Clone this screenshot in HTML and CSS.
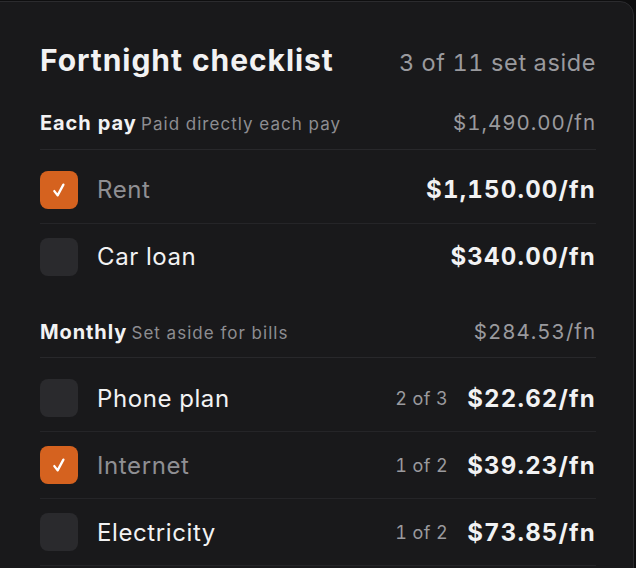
FILE: index.html
```html
<!DOCTYPE html>
<html lang="en">
<head>
  <meta charset="UTF-8">
  <meta name="viewport" content="width=device-width, initial-scale=1">
  <title>Fortnight checklist</title>
  <link rel="stylesheet" href="styles.css">
</head>
<body>

<div class="card">

  <div class="card-head">
    <h1>Fortnight checklist</h1>
    <span class="progress">3 of 11 set aside</span>
  </div>

  <div class="section">
    <div class="section-head">
      <div><b>Each pay</b> <span>Paid directly each pay</span></div>
      <div class="total">$1,490.00/fn</div>
    </div>
    <div class="rows">
      <div class="row done">
        <div class="box"><svg viewBox="0 0 16 16"><path d="M4.6 8.8 L7 11.9 L11.2 4.1"/></svg></div>
        <div class="name">Rent</div>
        <div class="amount">$1,150.00/fn</div>
      </div>
      <div class="row last">
        <div class="box"></div>
        <div class="name">Car loan</div>
        <div class="amount">$340.00/fn</div>
      </div>
    </div>
  </div>

  <div class="section">
    <div class="section-head">
      <div><b>Monthly</b> <span>Set aside for bills</span></div>
      <div class="total">$284.53/fn</div>
    </div>
    <div class="rows">
      <div class="row">
        <div class="box"></div>
        <div class="name">Phone plan</div>
        <div class="count">2 of 3</div>
        <div class="amount">$22.62/fn</div>
      </div>
      <div class="row done">
        <div class="box"><svg viewBox="0 0 16 16"><path d="M4.6 8.8 L7 11.9 L11.2 4.1"/></svg></div>
        <div class="name">Internet</div>
        <div class="count">1 of 2</div>
        <div class="amount">$39.23/fn</div>
      </div>
      <div class="row">
        <div class="box"></div>
        <div class="name">Electricity</div>
        <div class="count">1 of 2</div>
        <div class="amount">$73.85/fn</div>
      </div>
    </div>
  </div>

</div>

</body>
</html>
```

FILE: styles.css
```css
body {
  margin: 0;
  background: #0e0e0f;
  font-family: 'Inter', 'Liberation Sans', sans-serif;
  font-variant-numeric: tabular-nums;
  color: #f2f2f3;
  overflow: hidden;
}
.card {
  background: #19191b;
  border: 1px solid #2b2b2e;
  border-radius: 14px;
  margin: 1px 2px 0 -14px;
  padding: 0 37px 0 53px;
  height: 620px;
}
.card-head {
  display: flex;
  justify-content: space-between;
  align-items: baseline;
  padding-top: 40px;
  margin-bottom: 33px;
  line-height: 1.2;
}
.card-head h1 {
  margin: 0;
  font-size: 30px;
  font-weight: 700;
  letter-spacing: 0.95px;
}
.progress {
  font-size: 23.5px;
  letter-spacing: 0.6px;
  color: #9a9a9e;
}
.section-head {
  display: flex;
  justify-content: space-between;
  align-items: baseline;
  padding-bottom: 13px;
  border-bottom: 1px solid #28282b;
  line-height: 1.2;
}
.section-head b {
  font-size: 20px;
  font-weight: 700;
  letter-spacing: 0.9px;
}
.section-head span {
  font-size: 17px;
  letter-spacing: 1.05px;
  color: #8d8d91;
}
.section-head .total {
  font-size: 20.5px;
  letter-spacing: 1px;
  color: #9a9a9e;
}
.rows {
  padding-top: 7px;
  margin-bottom: 30px;
}
.row {
  display: flex;
  align-items: center;
  height: 66px;
  border-bottom: 1px solid #252528;
}
.row.last {
  border-bottom: none;
}
.box {
  width: 38px;
  height: 38px;
  border-radius: 8px;
  background: #2a2a2d;
  margin-right: 19px;
  display: flex;
  align-items: center;
  justify-content: center;
}
.box svg {
  width: 22px;
  height: 22px;
  fill: none;
  stroke: #fff;
  stroke-width: 1.7;
  stroke-linecap: round;
  stroke-linejoin: round;
}
.row.done .box {
  background: #d5621f;
}
.name {
  flex: 1;
  font-size: 24px;
  letter-spacing: 0.6px;
}
.row.done .name {
  color: #8f8f93;
}
.count {
  font-size: 18px;
  letter-spacing: 0.4px;
  color: #9a9a9e;
  margin-right: 19px;
}
.amount {
  font-size: 24px;
  font-weight: 700;
  letter-spacing: 1.2px;
}
```
